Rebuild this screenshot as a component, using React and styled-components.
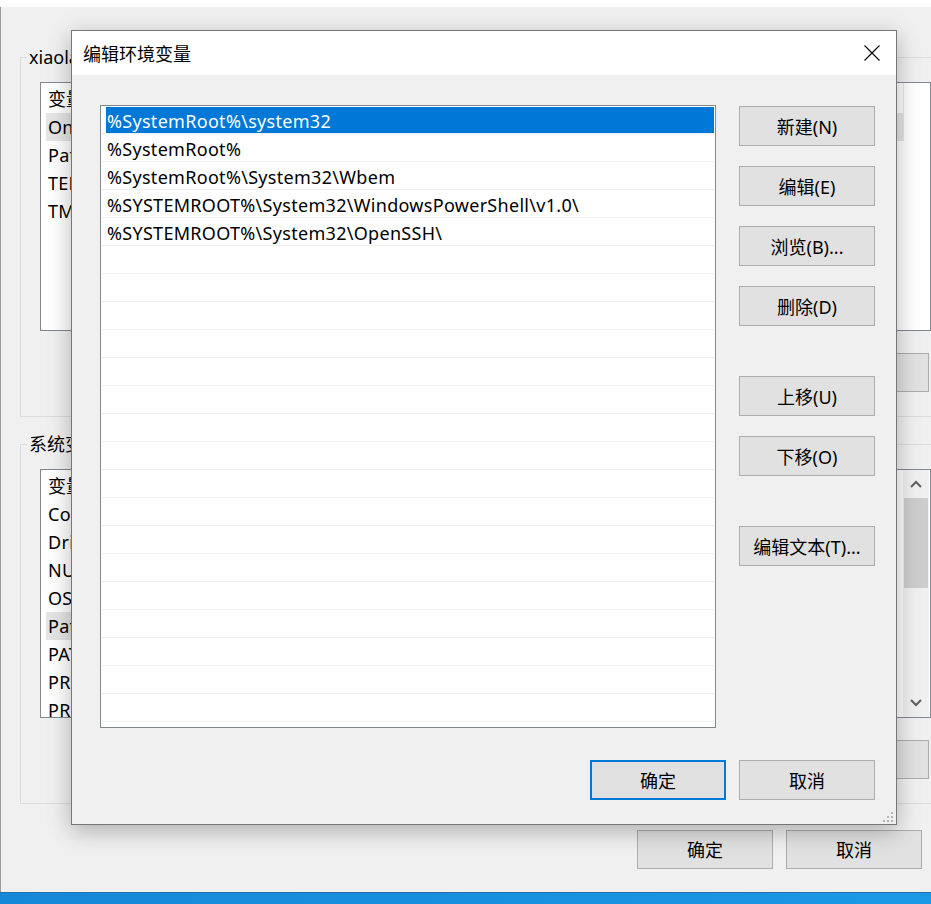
import React from "react";
import styled, { createGlobalStyle } from "styled-components";

const GlobalStyle = createGlobalStyle`
  html, body {
    margin: 0;
    padding: 0;
    background: #ffffff;
  }
  body {
    font-family: "Noto Sans", "Noto Sans CJK SC", sans-serif;
    font-size: 18px;
    color: #000000;
  }
  * {
    box-sizing: border-box;
  }
`;

const userVars = ["OneDrive", "Path", "TEMP", "TMP"];
const systemVars = [
  "ComSpec",
  "DriverData",
  "NUMBER_OF_PROCESSORS",
  "OS",
  "Path",
  "PATHEXT",
  "PROCESSOR_ARCHITECTURE",
  "PROCESSOR_IDENTIFIER",
];

const paths = [
  "%SystemRoot%\\system32",
  "%SystemRoot%",
  "%SystemRoot%\\System32\\Wbem",
  "%SYSTEMROOT%\\System32\\WindowsPowerShell\\v1.0\\",
  "%SYSTEMROOT%\\System32\\OpenSSH\\",
];

const sideButtons = [
  { label: "新建(N)", space: 0 },
  { label: "编辑(E)", space: 20 },
  { label: "浏览(B)...", space: 20 },
  { label: "删除(D)", space: 20 },
  { label: "上移(U)", space: 50 },
  { label: "下移(O)", space: 20 },
  { label: "编辑文本(T)...", space: 50 },
];

const BgList = ({ items, selected, scroll }) => (
  <ListBox>
    <ListContent>
      <HeaderRow>
        <HeaderCell>变量</HeaderCell>
        <HeaderCell $grow>值</HeaderCell>
      </HeaderRow>
      {items.map((name) => (
        <BgRow key={name} $selected={name === selected}>
          {name}
        </BgRow>
      ))}
    </ListContent>
    {scroll && (
      <ScrollBar>
        <ScrollArrow>
          <svg width="12" height="8" viewBox="0 0 12 8">
            <path d="M1 7 L6 2 L11 7" fill="none" stroke="#606060" strokeWidth="2" />
          </svg>
        </ScrollArrow>
        <ScrollThumb />
        <ScrollTrack />
        <ScrollArrow>
          <svg width="12" height="8" viewBox="0 0 12 8">
            <path d="M1 1 L6 6 L11 1" fill="none" stroke="#606060" strokeWidth="2" />
          </svg>
        </ScrollArrow>
      </ScrollBar>
    )}
  </ListBox>
);

const App = () => {
  const rows = Array.from({ length: 23 }, (_, i) => paths[i] || "");

  return (
    <>
      <GlobalStyle />
      <Screen>
        <TopStrip />
        <BgWindow>
          <Group>
            <Legend>xiaolan 的用户变量(U)</Legend>
            <BgList items={userVars} selected="OneDrive" />
            <GroupButtons>
              <Button>编辑(I)...</Button>
            </GroupButtons>
          </Group>
          <Group $top={15}>
            <Legend>系统变量(S)</Legend>
            <BgList items={systemVars} selected="Path" scroll />
            <GroupButtons>
              <Button>编辑(I)...</Button>
            </GroupButtons>
          </Group>
          <BottomBar>
            <Button>确定</Button>
            <Button>取消</Button>
          </BottomBar>
        </BgWindow>
        <Taskbar />

        <Dialog>
          <TitleBar>
            <Title>编辑环境变量</Title>
            <svg width="16" height="16" viewBox="0 0 16 16">
              <path d="M0.5 0.5 L15.5 15.5 M15.5 0.5 L0.5 15.5" stroke="#000" strokeWidth="1.1" />
            </svg>
          </TitleBar>
          <DialogBody>
            <MainRow>
              <PathList>
                {rows.map((p, i) => (
                  <PathRow key={i}>
                    <PathText $selected={i === 0}>{p}</PathText>
                  </PathRow>
                ))}
              </PathList>
              <SideButtons>
                {sideButtons.map((b) => (
                  <Button key={b.label} $space={b.space}>
                    {b.label}
                  </Button>
                ))}
              </SideButtons>
            </MainRow>
            <DialogFooter>
              <Button $primary>确定</Button>
              <Button>取消</Button>
            </DialogFooter>
          </DialogBody>
          <Grip>
            <svg width="10" height="10" viewBox="0 0 10 10" fill="#b4b4b4">
              <rect x="8" y="0" width="2" height="2" />
              <rect x="4" y="4" width="2" height="2" />
              <rect x="8" y="4" width="2" height="2" />
              <rect x="0" y="8" width="2" height="2" />
              <rect x="4" y="8" width="2" height="2" />
              <rect x="8" y="8" width="2" height="2" />
            </svg>
          </Grip>
        </Dialog>
      </Screen>
    </>
  );
};

const Screen = styled.div`
  position: relative;
  width: 931px;
  height: 904px;
  overflow: hidden;
  display: flex;
  flex-direction: column;
`;

const TopStrip = styled.div`
  height: 7px;
  flex-shrink: 0;
  background: #ffffff;
`;

const BgWindow = styled.div`
  width: 970px;
  height: 885px;
  flex-shrink: 0;
  background: #f0f0f0;
  border-left: 1px solid #9a9a9a;
  padding-left: 19px;
  display: flex;
  flex-direction: column;
`;

const Taskbar = styled.div`
  flex: 1;
  background: linear-gradient(90deg, #1688d8, #1a98e6);
  border-top: 1px solid #2a6f9f;
`;

const Group = styled.fieldset`
  margin: ${(p) => p.$top ?? 38}px 0 0 0;
  width: 931px;
  padding: 0 19px 24px 19px;
  border: 1px solid #dcdcdc;
  display: flex;
  flex-direction: column;
`;

const Legend = styled.legend`
  margin-left: -13px;
  padding: 0 2px;
  font-size: 18px;
  line-height: 24px;
  white-space: nowrap;
`;

const ListBox = styled.div`
  margin-top: 13px;
  width: 891px;
  height: 249px;
  background: #ffffff;
  border: 1px solid #828790;
  display: flex;
  overflow: hidden;
`;

const ListContent = styled.div`
  flex: 1;
  padding-left: 5px;
  padding-right: 26px;
  display: flex;
  flex-direction: column;
`;

const HeaderRow = styled.div`
  height: 30px;
  flex-shrink: 0;
  display: flex;
  align-items: stretch;
`;

const HeaderCell = styled.div`
  width: ${(p) => (p.$grow ? "auto" : "240px")};
  flex: ${(p) => (p.$grow ? 1 : "none")};
  padding-left: 2px;
  display: flex;
  align-items: center;
  border-right: 1px solid #e5e5e5;
`;

const BgRow = styled.div`
  height: 28px;
  flex-shrink: 0;
  padding-left: 2px;
  display: flex;
  align-items: center;
  white-space: nowrap;
  letter-spacing: 0.3px;
  background: ${(p) => (p.$selected ? "#e5e5e5" : "transparent")};
`;

const ScrollBar = styled.div`
  width: 26px;
  flex-shrink: 0;
  background: #f0f0f0;
  display: flex;
  flex-direction: column;
  margin-right: 1px;
`;

const ScrollArrow = styled.div`
  height: 28px;
  flex-shrink: 0;
  display: flex;
  align-items: center;
  justify-content: center;
`;

const ScrollThumb = styled.div`
  height: 90px;
  margin: 0 1px;
  background: #cdcdcd;
`;

const ScrollTrack = styled.div`
  flex: 1;
`;

const GroupButtons = styled.div`
  margin-top: 22px;
  display: flex;
  justify-content: flex-end;
  padding-right: 2px;
`;

const Button = styled.button`
  width: 136px;
  height: 39px;
  margin-top: ${(p) => p.$space ?? 0}px;
  flex-shrink: 0;
  background: #e1e1e1;
  border: ${(p) => (p.$primary ? "2px solid #0078d7" : "1px solid #adadad")};
  border-radius: 0;
  font-family: "Noto Sans", "Noto Sans CJK SC", sans-serif;
  font-size: 18px;
  color: #000000;
  padding: 0 0 1px 0;
  display: flex;
  align-items: center;
  justify-content: center;
`;

const BottomBar = styled.div`
  margin-top: 26px;
  display: flex;
  gap: 13px;
  padding-left: 617px;
`;

const Dialog = styled.div`
  position: absolute;
  left: 71px;
  top: 30px;
  width: 826px;
  height: 795px;
  background: #f0f0f0;
  border: 1px solid #777777;
  box-shadow: 0 6px 22px rgba(0, 0, 0, 0.28);
  display: flex;
  flex-direction: column;
`;

const TitleBar = styled.div`
  height: 44px;
  flex-shrink: 0;
  background: #ffffff;
  padding: 0 16px 0 11px;
  display: flex;
  align-items: center;
  justify-content: space-between;
`;

const Title = styled.div`
  font-size: 18px;
`;

const DialogBody = styled.div`
  flex: 1;
  padding: 30px 21px 0 28px;
  display: flex;
  flex-direction: column;
`;

const MainRow = styled.div`
  display: flex;
  gap: 23px;
`;

const PathList = styled.div`
  width: 616px;
  height: 623px;
  background: #ffffff;
  border: 1px solid #828790;
  overflow: hidden;
`;

const PathRow = styled.div`
  height: 28px;
  margin: 0 1px;
  border-bottom: 1px solid #f0f0f0;
  padding: 1px 0 0 4px;
  display: flex;
`;

const PathText = styled.div`
  flex: 1;
  padding: 2px 0 0 1px;
  display: flex;
  align-items: center;
  white-space: nowrap;
  letter-spacing: 0.3px;
  background: ${(p) => (p.$selected ? "#0078d7" : "transparent")};
  color: ${(p) => (p.$selected ? "#ffffff" : "#000000")};
`;

const SideButtons = styled.div`
  padding-top: 1px;
  display: flex;
  flex-direction: column;
  button {
    height: 40px;
  }
`;

const DialogFooter = styled.div`
  margin-top: 32px;
  display: flex;
  justify-content: flex-end;
  gap: 13px;
  button {
    height: 40px;
  }
`;

const Grip = styled.div`
  position: absolute;
  right: 3px;
  bottom: 2px;
  line-height: 0;
`;

export default App;
